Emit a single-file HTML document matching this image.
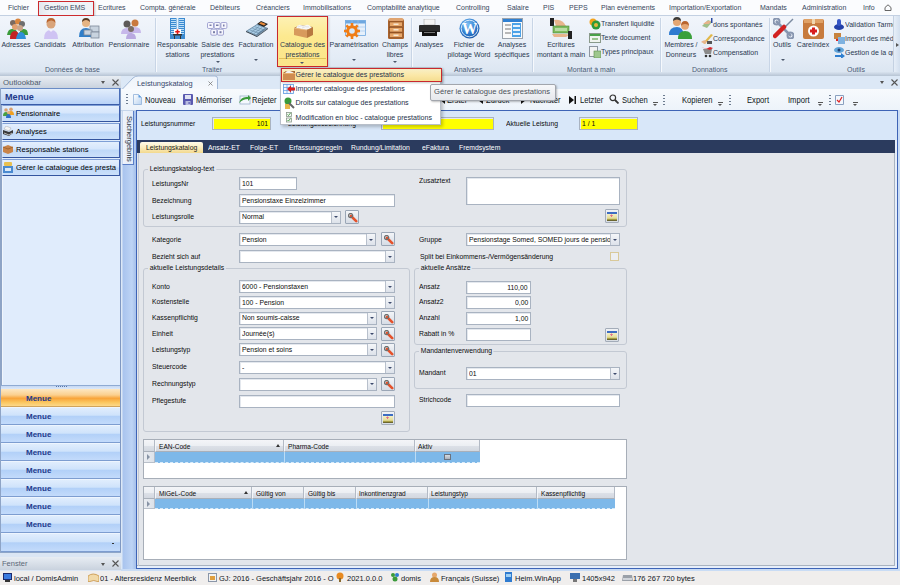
<!DOCTYPE html>
<html><head><meta charset="utf-8">
<style>
*{box-sizing:border-box}
html,body{margin:0;padding:0}
body{width:900px;height:585px;position:relative;overflow:hidden;background:#dbe6f4;font-family:"Liberation Sans",sans-serif;font-size:7px;color:#1c1c1c}
.a{position:absolute}
.t{position:absolute;white-space:nowrap;line-height:1}
/* menu */
#menubar{left:0;top:0;width:900px;height:16px;background:#fbfcfe;border-bottom:1px solid #c3d0e2}
.mi{position:absolute;top:4.2px;font-size:7px;color:#37465c;white-space:nowrap;line-height:1}
/* ribbon */
#ribbon{left:0;top:16px;width:900px;height:59px;background:linear-gradient(#f1f5fb,#e4ecf6 70%,#dbe5f1);border-bottom:1px solid #b9c9dd}
.rt{position:absolute;font-size:7px;color:#2a3850;white-space:nowrap;line-height:1;text-align:center}
.gl{position:absolute;top:65.8px;font-size:7px;color:#4a5a74;white-space:nowrap;line-height:1}
.sep{position:absolute;top:3px;width:1px;height:55px;background:#c8d5e6;box-shadow:1px 0 0 #f6f9fd}
.arr{position:absolute;width:0;height:0;border-left:2px solid transparent;border-right:2px solid transparent;border-top:2px solid #4a566a}
/* outlook */
.ob{position:absolute;left:2px;width:118px;border-left:1px solid #d3e3f9;border-top:1px solid #7f9fd6;border-bottom:1.5px solid #34559f;border-right:1px solid #3e5fae;background:linear-gradient(#e4effd,#d6e6fc 45%,#bed8f8 55%,#cbe0fa)}
.obt{position:absolute;left:16px;top:5px;font-size:7.6px;color:#000;white-space:nowrap;line-height:1}
.mb{position:absolute;left:2px;width:117px;height:18px;border-bottom:1px solid #7d9dd0;border-top:1px solid #eef5fe;background:linear-gradient(#e0edfd,#cfe3fb 45%,#b2d0f8 52%,#c3dbfb)}
.mbt{position:absolute;left:24px;top:5px;font-size:8px;font-weight:bold;color:#233a8c;line-height:1;margin-top:1px}
/* form */
.lb{position:absolute;font-size:7.9px;color:#0c0c0c;white-space:nowrap;line-height:1;transform:scaleX(.865);transform-origin:0 0}
.in{position:absolute;background:#fff;border:1px solid #a9b3c1;box-shadow:inset 1px 1px 0 #e4e8ee}
.in span{position:absolute;left:2px;top:2.5px;font-size:7.9px;color:#0c0c0c;white-space:nowrap;line-height:1;transform:scaleX(.865);transform-origin:0 0}
.dd{position:absolute;right:0;top:0;bottom:0;width:9px;background:linear-gradient(#f4f6f9,#dde2ea);border-left:1px solid #b8c0cc}
.dd:after{content:"";position:absolute;left:2px;top:4.5px;border-left:2.5px solid transparent;border-right:2.5px solid transparent;border-top:2.5px solid #3d4a6c}
.gb{position:absolute;border:1px solid #c3c9d3;border-radius:3px}
.gt{position:absolute;font-size:7.9px;color:#0c0c0c;transform:scaleX(.865);transform-origin:0 0;background:#e3e6ec;padding:0 2px;white-space:nowrap;line-height:1}
.wr{position:absolute;width:14px;height:14px;border:1px solid #9aa6b6;border-radius:1px;background:linear-gradient(#f3f5f8,#d6dce5)}
.ib{position:absolute;width:14px;height:14px;border:1px solid #a3acb9;border-radius:1px;background:linear-gradient(#f0f2f5,#d8dde4)}
.ib:after{content:"";position:absolute;left:1px;top:1.5px;width:10px;height:9px;background:radial-gradient(circle at 45% 40%,#e07088 0,#e07088 .9px,transparent 1.3px),linear-gradient(#3d6cc2 0,#3d6cc2 1.8px,#f4f0c6 1.8px,#e4dc98 70%,#b7ae48 80%,#4e4a26 100%)}
.gh{position:absolute;top:0;height:13px;background:linear-gradient(#f7f8fa,#e9ecf1 50%,#d9dee6);border-right:1px solid #b5bcc8;border-bottom:1px solid #a9b1bd}
.gh span{position:absolute;left:4px;top:3.5px;font-size:6.5px;color:#222;white-space:nowrap;line-height:1}
.gr{position:absolute;height:10px;background:#7db6ea;border-right:1px dashed #c8e0f6}

.tb{top:96.5px;font-size:8.2px;color:#0e1620;transform:scaleX(.93);transform-origin:0 0}
.tdd{position:absolute;top:102px;width:5px;height:5px}
.tdd:before{content:"";position:absolute;left:0;top:0;width:5px;height:1px;background:#555}
.tdd:after{content:"";position:absolute;left:0;top:2px;border-left:2.5px solid transparent;border-right:2.5px solid transparent;border-top:2.5px solid #555}
.grip{position:absolute;top:95px;width:2px;height:10px;background:repeating-linear-gradient(#6d7c90 0,#6d7c90 1px,transparent 1px,transparent 3px)}

.gh2{background:linear-gradient(#f4f5f8,#eceff3 50%,#dde1e8 52%,#d3d8e0);border-bottom:1px solid #a9b0ba;border-right:1px solid #b3bac5}
.st{position:absolute;top:574.6px;font-size:7.5px;color:#10161e;white-space:nowrap;line-height:1}
</style></head>
<body>



<!-- MENU BAR -->
<div id="menubar" class="a"></div>
<div class="mi" style="left:8px">Fichier</div>
<div class="a" style="left:37.5px;top:1px;width:56px;height:14.5px;border:1.5px solid #cc2a2e;background:linear-gradient(90deg,#e3e7ee,#f0f3f8 20%,#f0f3f8);box-shadow:1px 1px 2px rgba(0,0,0,.2)"></div>
<div class="mi" style="left:44px">Gestion EMS</div>
<div class="mi" style="left:98px">Ecritures</div>
<div class="mi" style="left:140px">Compta. générale</div>
<div class="mi" style="left:210px">Débiteurs</div>
<div class="mi" style="left:256px">Créanciers</div>
<div class="mi" style="left:303px">Immobilisations</div>
<div class="mi" style="left:367px">Comptabilité analytique</div>
<div class="mi" style="left:456px">Controlling</div>
<div class="mi" style="left:507px">Salaire</div>
<div class="mi" style="left:543px">PIS</div>
<div class="mi" style="left:569px">PEPS</div>
<div class="mi" style="left:601px">Plan evènements</div>
<div class="mi" style="left:669px">Importation/Exportation</div>
<div class="mi" style="left:760px">Mandats</div>
<div class="mi" style="left:802px">Administration</div>
<div class="mi" style="left:863px">Info</div>
<svg class="a" style="left:884px;top:4px" width="8" height="7" viewBox="0 0 8 7"><path d="M1 6.5V3.5L4 .8l3 2.7v3z" fill="none" stroke="#555" stroke-width=".9"/></svg>


<!-- RIBBON -->
<div id="ribbon" class="a"></div>
<div class="sep" style="left:155px;top:18px"></div>
<div class="sep" style="left:411px;top:18px"></div>
<div class="sep" style="left:532px;top:18px"></div>
<div class="sep" style="left:660px;top:18px"></div>
<div class="sep" style="left:769px;top:18px"></div>
<!-- Donnees de base -->
<svg class="a" style="left:7px;top:18px" width="21" height="21" viewBox="0 0 21 21">
 <circle cx="6" cy="5" r="3" fill="#7a6a60"/><circle cx="11" cy="3.5" r="3" fill="#d9863f"/><circle cx="15" cy="6" r="3" fill="#6e6e6e"/>
 <path d="M0 17q1-7 6-6 4 0 5 6z" fill="#3a9b3a"/><path d="M12 17q1-7 5-6 4 0 4 6z" fill="#3a9b3a"/>
 <circle cx="8" cy="9" r="3" fill="#e0a070"/><circle cx="13" cy="10" r="3" fill="#c9a489"/>
 <path d="M3 21q0-8 5-8 4 0 5 8z" fill="#c42424"/><path d="M9 21q1-7 5-7 4 0 5 7z" fill="#2f8fd8"/>
</svg>
<div class="rt" style="left:0px;width:32px;top:41.2px">Adresses</div>
<svg class="a" style="left:43px;top:18px" width="16" height="21" viewBox="0 0 16 21">
 <circle cx="8" cy="6" r="4.5" fill="#d9a47a"/><path d="M3.5 5q0-5 4.5-5 4.5 0 4.5 5q-2-3-4.5-2.5-2.5 0-4.5 2.5z" fill="#b9652e"/>
 <path d="M1 21q0-9 7-9 7 0 7 9z" fill="#cfc3f3"/><path d="M6 12h4l-2 2z" fill="#f4f0fa"/>
</svg>
<div class="rt" style="left:30px;width:40px;top:41.2px">Candidats</div>
<svg class="a" style="left:78px;top:18px" width="22" height="21" viewBox="0 0 22 21">
 <circle cx="8" cy="5" r="4" fill="#e6b483"/><path d="M4 4q0-4 4-4 4 0 4 4q-2-2-4-2-2 0-4 2z" fill="#5a3a20"/>
 <path d="M1 19q0-9 7-9 6 0 7 9z" fill="#2f7ec9"/>
 <rect x="12" y="8" width="9" height="6" fill="#c8d3df" stroke="#7b8797" stroke-width=".8"/>
 <rect x="6" y="12" width="8" height="5" fill="#c8d3df" stroke="#7b8797" stroke-width=".8"/>
 <rect x="13" y="14" width="8" height="6" fill="#c8d3df" stroke="#7b8797" stroke-width=".8"/>
</svg>
<div class="rt" style="left:68px;width:40px;top:41.2px">Attribution</div>
<svg class="a" style="left:120px;top:18px" width="21" height="21" viewBox="0 0 21 21">
 <circle cx="7" cy="6" r="3.5" fill="#5e5a58"/><circle cx="15" cy="5" r="3.5" fill="#c9793f"/>
 <path d="M1 16q0-6 6-6 5 0 5 6z" fill="#c7b8ea"/><path d="M10 15q0-6 5-6 6 0 6 6z" fill="#c7b8ea"/>
 <circle cx="11" cy="11" r="3" fill="#7a6e66"/><path d="M6 21q0-6 5-6 5 0 5 6z" fill="#b9a9e0"/>
</svg>
<div class="rt" style="left:104px;width:50px;top:41.2px">Pensionnaire</div>
<div class="gl" style="left:45px">Données de base</div>
<!-- Traiter -->
<svg class="a" style="left:169px;top:18px" width="17" height="21" viewBox="0 0 17 21">
 <rect x="1" y="0" width="15" height="21" fill="#3b8ad0"/>
 <g fill="#bfe0f8"><rect x="2" y="1" width="5" height="1"/><rect x="10" y="1" width="5" height="1"/><rect x="2" y="3" width="5" height="1"/><rect x="10" y="3" width="5" height="1"/><rect x="2" y="5" width="5" height="1"/><rect x="10" y="5" width="5" height="1"/><rect x="2" y="7" width="5" height="1"/><rect x="10" y="7" width="5" height="1"/><rect x="2" y="9" width="5" height="1"/><rect x="10" y="9" width="5" height="1"/><rect x="2" y="11" width="3" height="1"/><rect x="12" y="11" width="3" height="1"/><rect x="2" y="13" width="3" height="1"/><rect x="12" y="13" width="3" height="1"/><rect x="2" y="15" width="3" height="1"/><rect x="12" y="15" width="3" height="1"/></g>
 <rect x="7.5" y="0" width="2" height="11" fill="#e8f4fc"/>
 <rect x="5" y="11" width="7" height="5" fill="#fff"/><path d="M7.7 11.5h1.6v1.4h1.5v1.6H9.3v1.4H7.7v-1.4H6.2v-1.6h1.5z" fill="#e01818"/>
 <rect x="4" y="16" width="9" height="1.5" fill="#333"/><rect x="5" y="17.5" width="1" height="3.5" fill="#333"/><rect x="11" y="17.5" width="1" height="3.5" fill="#333"/>
</svg>
<div class="rt" style="left:150px;width:55px;top:41.2px">Responsable</div>
<div class="rt" style="left:150px;width:55px;top:51px">stations</div>
<svg class="a" style="left:207px;top:22px" width="21" height="14" viewBox="0 0 21 14">
 <g fill="#f6f6fd" stroke="#8f92c8" stroke-width=".8"><rect x=".5" y=".5" width="6" height="6" rx="1.2"/><rect x="7.2" y=".5" width="6" height="6" rx="1.2"/><rect x="13.9" y=".5" width="6" height="6" rx="1.2"/><rect x="3.8" y="7.2" width="6" height="6" rx="1.2"/><rect x="10.5" y="7.2" width="6" height="6" rx="1.2"/></g>
 <g fill="#7a7fa8"><rect x="2.5" y="2.5" width="2" height="1.5"/><rect x="9" y="2.5" width="2.5" height="1.5"/><rect x="16" y="2.5" width="1.5" height="2"/><rect x="6" y="9.2" width="2" height="2"/><rect x="12.5" y="9.2" width="2" height="2"/></g>
</svg>
<div class="rt" style="left:190px;width:55px;top:41.2px">Saisie des</div>
<div class="rt" style="left:190px;width:55px;top:51px">prestations</div>
<div class="arr" style="left:216px;top:61px"></div>
<svg class="a" style="left:246px;top:21px" width="22" height="16" viewBox="0 0 22 16">
 <path d="M0 10L11 3l11 4-11 8z" fill="#6f8ea8"/><path d="M1.5 10L11 4l8 3-9 6.5z" fill="#a9cde6"/>
 <g stroke="#5a7a96" stroke-width=".5"><path d="M4 9l9 3.2M6.5 7.4l9 3.2M9 5.8l8.5 3"/><path d="M5 11.5l8-6M8 12.5l8-6M11 13.5l7.5-5.5"/></g>
 <path d="M11 3l4-3 7 3-4 3z" fill="#222"/><path d="M15 1l5 2-2 1.5-5-2z" fill="#e88a3a"/>
 <path d="M0 10l11 5v1L0 11z" fill="#2c3a46"/><path d="M11 15l11-8v1l-11 8z" fill="#3c4a56"/>
</svg>
<div class="rt" style="left:230px;width:52px;top:41.2px">Facturation</div>
<div class="arr" style="left:254px;top:59px"></div>
<div class="gl" style="left:202px">Traiter</div>
<!-- Catalogue highlighted -->
<div class="a" style="left:277px;top:16px;width:50.5px;height:50.5px;border:1.5px solid #c8282e;background:linear-gradient(#fdf1b4,#fde98f 40%,#fbe58a);box-shadow:1px 1px 2px rgba(0,0,0,.18)"></div>
<div class="a" style="left:279px;top:58px;width:47px;height:1px;background:#e2c25a"></div>
<svg class="a" style="left:293px;top:24px" width="21" height="14" viewBox="0 0 21 14">
 <path d="M1 4l6-3 13 2-6 3z" fill="#a86a34"/>
 <path d="M3 4q2-4 5-3t5 0 4 1 2 2l-6 2z" fill="#f8f8f8"/><path d="M5 3q3-2 6-1M9 4q3-2 7-1" stroke="#ccc" stroke-width=".5" fill="none"/>
 <path d="M1 4l13 2v8L1 11z" fill="#d89a5c"/><path d="M14 6l6-3v8l-6 3z" fill="#b87840"/>
 <path d="M1 4l13 2" stroke="#f0c890" stroke-width=".6"/>
</svg>
<div class="rt" style="left:277px;width:51px;top:41.2px">Catalogue des</div>
<div class="rt" style="left:277px;width:51px;top:51px">prestations</div>
<div class="arr" style="left:300px;top:62px"></div>
<svg class="a" style="left:344px;top:20px" width="22" height="19" viewBox="0 0 22 19">
 <rect x="1.5" y=".5" width="20" height="15" fill="#e6f0fb" stroke="#6fa8e0" stroke-width=".8"/><rect x="1.5" y=".5" width="20" height="3" fill="#6fa8e0"/>
 <g stroke="#9cc4ec" stroke-width=".6"><path d="M8 0v16M14 0v16M1 7h21M1 11h21"/></g>
 <g transform="translate(8 11)"><circle r="5.8" fill="#f07d16"/><g fill="#f07d16"><rect x="-1.3" y="-8" width="2.6" height="16"/><rect x="-8" y="-1.3" width="16" height="2.6"/><rect x="-1.3" y="-8" width="2.6" height="16" transform="rotate(45)"/><rect x="-1.3" y="-8" width="2.6" height="16" transform="rotate(-45)"/></g><circle r="2.8" fill="#d8e8f8"/></g>
</svg>
<div class="rt" style="left:325px;width:58px;top:41.2px">Paramétrisation</div>
<div class="arr" style="left:352px;top:59px"></div>
<svg class="a" style="left:388px;top:18px" width="16" height="21" viewBox="0 0 16 21">
 <rect x="0" y="1" width="16" height="20" rx="1.5" fill="#a8622c"/><rect x=".5" y="0" width="15" height="3" rx="1.5" fill="#e0a470"/>
 <g fill="#e8a86a" stroke="#7a4018" stroke-width=".5"><rect x="1.5" y="4" width="13" height="4.5"/><rect x="1.5" y="9.5" width="13" height="4.5"/><rect x="1.5" y="15" width="13" height="4.5"/></g>
 <g fill="#f6e6d0"><rect x="5.5" y="5.5" width="5" height="1.5"/><rect x="5.5" y="11" width="5" height="1.5"/><rect x="5.5" y="16.5" width="5" height="1.5"/></g>
</svg>
<div class="rt" style="left:375px;width:40px;top:41.2px">Champs</div>
<div class="rt" style="left:375px;width:40px;top:51px">libres</div>
<div class="arr" style="left:393px;top:61px"></div>
<!-- Analyses -->
<svg class="a" style="left:419px;top:19px" width="21" height="17" viewBox="0 0 21 17">
 <rect x="5" y="0" width="11" height="6" fill="#f4f4f4" stroke="#999" stroke-width=".5"/><path d="M1 6h19q1 0 1 1v6H0V7q0-1 1-1z" fill="#2b2b2b"/><rect x="3" y="12" width="15" height="5" fill="#111"/><rect x="5" y="13" width="11" height="1" fill="#777"/>
</svg>
<div class="rt" style="left:410px;width:38px;top:41.2px">Analyses</div>
<svg class="a" style="left:459px;top:18px" width="21" height="21" viewBox="0 0 21 21">
 <defs><radialGradient id="wg" cx=".4" cy=".3" r=".8"><stop offset="0" stop-color="#7ec0f4"/><stop offset=".6" stop-color="#2a78cc"/><stop offset="1" stop-color="#1a4f9a"/></radialGradient></defs>
 <circle cx="10.5" cy="10.5" r="10" fill="url(#wg)"/><circle cx="10.5" cy="10.5" r="8.3" fill="none" stroke="#e8f3fc" stroke-width=".9"/>
 <text x="10.5" y="16" text-anchor="middle" font-family="Liberation Serif" font-weight="bold" font-size="16" fill="#fff" transform="translate(10.5 0) scale(.95 1) translate(-10.5 0)">W</text>
</svg>
<div class="rt" style="left:440px;width:58px;top:41.2px">Fichier de</div>
<div class="rt" style="left:438px;width:62px;top:51px">pilotage Word</div>
<svg class="a" style="left:502px;top:18px" width="21" height="21" viewBox="0 0 21 21">
 <rect x=".5" y=".5" width="20" height="20" fill="#fafafa" stroke="#9aa3ad"/><rect x="1" y="1" width="19" height="3" fill="#2f80d2"/>
 <g fill="#b8b8b8"><rect x="3" y="6" width="6" height="2"/><rect x="3" y="10" width="6" height="2"/><rect x="3" y="14" width="6" height="2"/></g>
 <rect x="10" y="5" width="9" height="14" fill="#4da3e8"/><g fill="#e7f3fd"><rect x="11" y="7" width="7" height="2"/><rect x="11" y="11" width="7" height="2"/><rect x="11" y="15" width="7" height="2"/></g>
</svg>
<div class="rt" style="left:484px;width:56px;top:41.2px">Analyses</div>
<div class="rt" style="left:484px;width:56px;top:51px">spécifiques</div>
<div class="gl" style="left:454px">Analyses</div>
<!-- Montant a main -->
<svg class="a" style="left:550px;top:18px" width="22" height="21" viewBox="0 0 22 21">
 <rect x="0" y="0" width="4" height="8" fill="#222"/><path d="M4 2q6-1 10 3l2 3H6z" fill="#e8b58c"/>
 <rect x="3" y="8" width="16" height="7" fill="#7dbb5e" stroke="#4b8a36" stroke-width=".6"/><rect x="5" y="10" width="12" height="3" fill="#b9dca4"/>
 <path d="M2 16h12q4 0 5 1l-3 2H4z" fill="#e8b58c"/><rect x="18" y="13" width="4" height="8" fill="#222"/>
</svg>
<div class="rt" style="left:535px;width:52px;top:41.2px">Ecritures</div>
<div class="rt" style="left:531px;width:60px;top:51px">montant à main</div>
<svg class="a" style="left:589px;top:18px" width="12" height="12" viewBox="0 0 12 12"><circle cx="4" cy="4" r="3.5" fill="#f2a31d"/><circle cx="7" cy="7" r="4.5" fill="#2e9a3a"/><circle cx="7" cy="7" r="2" fill="#e5b73d"/></svg>
<div class="t" style="left:601px;top:20px;font-size:7px;color:#2a3850">Transfert liquidité</div>
<svg class="a" style="left:589px;top:33px" width="12" height="10" viewBox="0 0 12 10"><rect x=".5" y=".5" width="11" height="9" fill="#f0f4ef" stroke="#8a9a8a"/><rect x="1" y="1" width="10" height="2" fill="#4aa048"/><rect x="3" y="5" width="6" height="2" fill="#9ac48f"/></svg>
<div class="t" style="left:601px;top:34px;font-size:7px;color:#2a3850">Texte document</div>
<svg class="a" style="left:589px;top:46px" width="12" height="12" viewBox="0 0 12 12"><rect x=".5" y=".5" width="8" height="10" fill="#f3f3f3" stroke="#8d96a0"/><rect x="5" y="5" width="7" height="7" fill="#9ec78d" stroke="#5b8e4c" stroke-width=".6"/></svg>
<div class="t" style="left:601px;top:48px;font-size:7px;color:#2a3850">Types principaux</div>
<div class="gl" style="left:567px">Montant à main</div>
<!-- Donnations -->
<svg class="a" style="left:669px;top:17px" width="23" height="22" viewBox="0 0 23 22">
 <circle cx="8" cy="5" r="4" fill="#e5a774"/><path d="M4 4q0-4 4-4 4 0 4 4q-2-1.5-4-1.5T4 4z" fill="#3b3b3b"/>
 <path d="M0 18q0-8 8-8 6 0 7 8z" fill="#2f7bd0"/>
 <circle cx="16" cy="9" r="3.8" fill="#e5a774"/><path d="M12 9q0-5 4-5 4 0 4 5q-1-2-4-2t-4 2z" fill="#b9652e"/>
 <path d="M9 22q0-8 7-8 7 0 7 8z" fill="#3aa03a"/>
</svg>
<div class="rt" style="left:655px;width:52px;top:41.2px">Membres /</div>
<div class="rt" style="left:655px;width:52px;top:51px">Donneurs</div>
<svg class="a" style="left:701px;top:18px" width="12" height="12" viewBox="0 0 12 12"><path d="M1 8l6-6 4 2-5 6z" fill="#9fbf8a"/><path d="M2 6q4-4 8-3l-2 3z" fill="#e7b48a"/><rect x="10" y="0" width="1.5" height="5" fill="#2a4aa0"/></svg>
<div class="t" style="left:713px;top:20.5px;font-size:7px;color:#2a3850">dons spontanés</div>
<svg class="a" style="left:701px;top:32px" width="12" height="12" viewBox="0 0 12 12"><path d="M2 11l8-9 2 1-8 9z" fill="#e1b84a"/><path d="M0 10q3-3 6-1l-2 3z" fill="#e7b48a"/><rect x="6" y="9" width="5" height="3" fill="#555"/></svg>
<div class="t" style="left:713px;top:34.5px;font-size:7px;color:#2a3850">Correspondance</div>
<svg class="a" style="left:701px;top:46px" width="12" height="12" viewBox="0 0 12 12"><path d="M2 3h9l-1 5H4z" fill="#8a8a8a"/><circle cx="5" cy="10" r="1.3" fill="#333"/><circle cx="9" cy="10" r="1.3" fill="#333"/><path d="M0 1l5 2 4-2 3 1-3 2z" fill="#d9262b"/></svg>
<div class="t" style="left:713px;top:48.5px;font-size:7px;color:#2a3850">Compensation</div>
<div class="gl" style="left:692px">Donnations</div>
<!-- Outils -->
<svg class="a" style="left:773px;top:18px" width="21" height="21" viewBox="0 0 21 21">
 <path d="M3 3l15 15" stroke="#8896b0" stroke-width="2.5"/><circle cx="3.5" cy="3.5" r="3" fill="none" stroke="#8896b0" stroke-width="2"/><circle cx="17.5" cy="17.5" r="3" fill="none" stroke="#8896b0" stroke-width="2"/>
 <path d="M20 1L11 10" stroke="#7b8aa0" stroke-width="1.5"/><path d="M11 9l-9 9" stroke="#d22222" stroke-width="4.5" stroke-linecap="round"/>
</svg>
<div class="rt" style="left:767px;width:30px;top:41.2px">Outils</div>
<div class="arr" style="left:781px;top:59px"></div>
<svg class="a" style="left:803px;top:18px" width="21" height="21" viewBox="0 0 21 21">
 <rect x="0" y="1" width="21" height="20" rx="2" fill="#c77b3e"/><rect x="1" y="1" width="19" height="4" fill="#e0a267"/><rect x="9" y="1" width="3" height="5" fill="#f0d7b0"/>
 <circle cx="10.5" cy="13" r="5.5" fill="#fff"/><path d="M9 9.5h3v2h2v3h-2v2H9v-2H7v-3h2z" fill="#d81e1e"/>
</svg>
<div class="rt" style="left:795px;width:36px;top:41.2px">CareIndex</div>
<svg class="a" style="left:834px;top:18px" width="10" height="12" viewBox="0 0 10 12"><ellipse cx="5" cy="9" rx="5" ry="3" fill="#2340a8"/><rect x="3" y="1" width="4" height="7" rx="2" fill="#3656c6"/></svg>
<div class="t" style="left:845px;top:20.5px;font-size:7px;color:#2a3850;width:48px;overflow:hidden">Validation Tarmed</div>
<svg class="a" style="left:834px;top:32px" width="11" height="12" viewBox="0 0 11 12"><rect x="0" y="1" width="7" height="6" fill="#c7843f"/><rect x="4" y="5" width="7" height="7" fill="#7fb2e0"/><path d="M2 7h2v2H2z" fill="#d22"/></svg>
<div class="t" style="left:845px;top:34.5px;font-size:7px;color:#2a3850;width:48px;overflow:hidden">Import des médicaments</div>
<svg class="a" style="left:834px;top:46px" width="11" height="12" viewBox="0 0 11 12"><ellipse cx="5" cy="4" rx="5" ry="3" fill="#5fa3d8"/><circle cx="5" cy="4" r="1.5" fill="#1f3f70"/><path d="M1 9h6V7l4 3-4 3v-2H1z" fill="#2f7fd0"/></svg>
<div class="t" style="left:845px;top:48.5px;font-size:7px;color:#2a3850;width:48px;overflow:hidden">Gestion de la qualité</div>
<div class="gl" style="left:847px">Outils</div>
<div class="a" style="left:893px;top:16px;width:7px;height:57px;background:linear-gradient(90deg,#e6eef8,#d3dfee);border-left:1px solid #c4d1e2"></div>
<div class="a" style="left:896px;top:43px;border-top:2px solid transparent;border-bottom:2px solid transparent;border-left:3px solid #555"></div>

<!-- OUTLOOKBAR -->
<div class="a" style="left:0;top:72px;width:900px;height:4px;background:linear-gradient(#d9e3ef,#b7c4d4)"></div>
<div class="a" style="left:0;top:76px;width:121px;height:477px;background:#e0ecfc;border-right:1px solid #7f98c2;border-left:2px solid #8ea4c6;box-shadow:inset 1px 0 0 #f0f5fc"></div>
<div class="a" style="left:0;top:76px;width:121px;height:12px;background:linear-gradient(#e8edf3,#c9d2de)"></div>
<div class="t" style="left:3px;top:79px;font-size:7.8px;color:#4f5b6c">Outlookbar</div>
<div class="a" style="left:101px;top:81px;border-left:2.5px solid transparent;border-right:2.5px solid transparent;border-top:3px solid #555"></div>
<svg class="a" style="left:112px;top:79px" width="7" height="7" viewBox="0 0 7 7"><path d="M.5.5l6 6M6.5.5l-6 6" stroke="#555" stroke-width="1.1"/></svg>
<div class="a" style="left:1px;top:88px;width:119px;height:17px;border-top:1px solid #6a8cc6;border-bottom:1px solid #3a5ca8;border-right:1px solid #4a6fb8;background:linear-gradient(#e2eefc,#cfe0f9 50%,#b9d3f7)"></div>
<div class="t" style="left:4.5px;top:91.5px;font-size:9.6px;font-weight:bold;color:#1f3a8a;transform:scaleX(.95);transform-origin:0 0">Menue</div>
<div class="ob" style="top:105px;height:17px"></div>
<div class="ob" style="top:123px;height:17px"></div>
<div class="ob" style="top:141px;height:17px"></div>
<div class="ob" style="top:159px;height:17px"></div>
<svg class="a" style="left:3px;top:107px" width="11" height="11" viewBox="0 0 11 11"><circle cx="3" cy="3" r="1.8" fill="#d9a070"/><circle cx="8" cy="2.2" r="1.8" fill="#d9a070"/><path d="M0 9q0-4 3-4t3 4z" fill="#4aa040"/><path d="M5 8q0-4 3-4t3 4z" fill="#f0a020"/><circle cx="5.5" cy="5.5" r="1.6" fill="#e0b080"/><path d="M3 11q0-4 2.5-4T8 11z" fill="#2f6fc8"/></svg>
<div class="obt" style="top:110px">Pensionnaire</div>
<svg class="a" style="left:3px;top:126px" width="10" height="10" viewBox="0 0 10 10"><path d="M3 0l5 2-2 3-5-2z" fill="#f4f4f4" stroke="#999" stroke-width=".4"/><path d="M0 4l6 2 4-2v3l-4 3-6-2z" fill="#3a3a3a"/><path d="M1 7l5 2 3-2" fill="none" stroke="#ddd" stroke-width=".8"/></svg>
<div class="obt" style="top:128px">Analyses</div>
<svg class="a" style="left:3px;top:144px" width="10" height="10" viewBox="0 0 10 10"><path d="M0 3l5-2 5 2v5l-5 2-5-2z" fill="#c98449"/><path d="M0 3l5 2 5-2" fill="none" stroke="#8a5020" stroke-width=".6"/></svg>
<div class="obt" style="top:146px">Responsable stations</div>
<svg class="a" style="left:3px;top:162px" width="10" height="11" viewBox="0 0 10 11"><rect x="1" y="0" width="8" height="4" rx="1" fill="#e8c050"/><rect x="0" y="4" width="10" height="7" fill="#4a8ad0"/><rect x="2" y="6" width="6" height="3" fill="#dbe9f8"/></svg>
<div class="obt" style="top:164px;width:100px;overflow:hidden">Gérer le catalogue des prestations</div>
<!-- splitter -->
<div class="a" style="left:1px;top:385px;width:119px;height:4px;background:linear-gradient(#c6d8f2,#dbe8fa);border-top:1px solid #8eaad3"></div>
<div class="a" style="left:56px;top:386px;width:11px;height:1px;background:repeating-linear-gradient(90deg,#5c78a8 0,#5c78a8 1px,transparent 1px,transparent 2px)"></div>
<div class="a" style="left:1px;top:389px;width:119px;height:18px;border-bottom:1px solid #d0a45c;background:linear-gradient(#fde7c2,#fbd08f 35%,#f8a43a 55%,#fbc862 80%,#fcd88a)"></div>
<div class="mbt" style="left:26px;top:394px">Menue</div>
<div class="mb" style="width:119px;left:1px;top:407px"></div><div class="mbt" style="left:26px;top:412px">Menue</div>
<div class="mb" style="width:119px;left:1px;top:425px"></div><div class="mbt" style="left:26px;top:430px">Menue</div>
<div class="mb" style="width:119px;left:1px;top:443px"></div><div class="mbt" style="left:26px;top:448px">Menue</div>
<div class="mb" style="width:119px;left:1px;top:461px"></div><div class="mbt" style="left:26px;top:466px">Menue</div>
<div class="mb" style="width:119px;left:1px;top:479px"></div><div class="mbt" style="left:26px;top:484px">Menue</div>
<div class="mb" style="width:119px;left:1px;top:497px"></div><div class="mbt" style="left:26px;top:502px">Menue</div>
<div class="mb" style="width:119px;left:1px;top:515px"></div><div class="mbt" style="left:26px;top:520px">Menue</div>
<div class="mb" style="width:119px;left:1px;top:533px;height:19px"></div>
<div class="a" style="left:112px;top:543px;width:2px;height:1px;background:#333"></div>
<div class="a" style="left:0;top:552px;width:121px;height:1px;background:#8ea6c8"></div>
<!-- Fenster -->
<div class="a" style="left:0;top:553px;width:121px;height:4px;background:#dbe6f4"></div>
<div class="a" style="left:0;top:557px;width:121px;height:13px;background:linear-gradient(#e8edf3,#c9d2de)"></div>
<div class="t" style="left:2px;top:560px;font-size:7.5px;color:#5c6878">Fenster</div>
<div class="a" style="left:101px;top:563px;border-left:2.5px solid transparent;border-right:2.5px solid transparent;border-top:3px solid #555"></div>
<svg class="a" style="left:112px;top:560px" width="7" height="7" viewBox="0 0 7 7"><path d="M.5.5l6 6M6.5.5l-6 6" stroke="#555" stroke-width="1.1"/></svg>

<!-- DOC AREA -->
<div class="a" style="left:121px;top:76px;width:779px;height:13px;background:#dce8f6"></div>
<svg class="a" style="left:121px;top:75px" width="98" height="15" viewBox="0 0 98 15"><path d="M1 14.5L12 3Q14 1 17 1H94q2.5 0 2.5 2.5V14.5z" fill="url(#tg)" stroke="#a3b8d6" stroke-width="1"/><defs><linearGradient id="tg" x1="0" y1="0" x2="0" y2="1"><stop offset="0" stop-color="#eef4fb"/><stop offset="1" stop-color="#f6f9fd"/></linearGradient></defs></svg>
<div class="t" style="left:137px;top:79.5px;font-size:7.8px;color:#34466a;transform:scaleX(.95);transform-origin:0 0">Leistungskatalog</div>
<svg class="a" style="left:208px;top:81px" width="5" height="5" viewBox="0 0 5 5"><path d="M.5.5l4 4M4.5.5l-4 4" stroke="#7a7a7a" stroke-width=".8"/></svg>
<div class="a" style="left:880px;top:81px;border-left:2.5px solid transparent;border-right:2.5px solid transparent;border-top:3px solid #555"></div>
<svg class="a" style="left:891px;top:79px" width="7" height="7" viewBox="0 0 7 7"><path d="M.5.5l6 6M6.5.5l-6 6" stroke="#555" stroke-width="1.1"/></svg>
<!-- toolbar -->
<div class="a" style="left:121px;top:89px;width:779px;height:22px;background:linear-gradient(#f7fafd,#edf3fa);border-bottom:1px solid #c4d4ea"></div>
<div class="a" style="left:126px;top:94px;width:2px;height:11px;background:repeating-linear-gradient(#6d7c90 0,#6d7c90 1px,transparent 1px,transparent 3px)"></div>
<svg class="a" style="left:133px;top:94px" width="9" height="11" viewBox="0 0 9 11"><defs><linearGradient id="ng" x1="0" y1="0" x2="1" y2="1"><stop offset="0" stop-color="#fff"/><stop offset="1" stop-color="#b9d3f0"/></linearGradient></defs><path d="M.5.5h5l3 3v7H.5z" fill="url(#ng)" stroke="#8fb0d8" stroke-width=".8"/><path d="M5.5.5v3h3" fill="#5b9be0"/></svg>
<div class="t tb" style="left:145px">Nouveau</div>
<svg class="a" style="left:183px;top:94px" width="10" height="11" viewBox="0 0 10 11"><rect x="0" y="0" width="10" height="11" rx="1" fill="#5a5ab0"/><rect x="2" y="1" width="6" height="4" fill="#dfe2f2"/><rect x="2.5" y="7" width="5" height="4" fill="#b8bce0"/><rect x="5.5" y="8" width="1.2" height="2" fill="#5a5ab0"/></svg>
<div class="t tb" style="left:196px">Mémoriser</div>
<svg class="a" style="left:239px;top:93px" width="12" height="12" viewBox="0 0 12 12"><rect x="1" y="3" width="10" height="8" fill="#f4f8fd" stroke="#9db2cc" stroke-width=".8"/><path d="M0 10q2-7 9-6V2l3 3-3 3V6q-5 0-9 4z" fill="#3a9a3a"/></svg>
<div class="t tb" style="left:252px">Rejeter</div>
<svg class="a" style="left:439px;top:96px" width="6" height="8" viewBox="0 0 6 8"><rect x="0" y="0" width="1.5" height="8" fill="#111"/><path d="M6 0L1.5 4 6 8z" fill="#111"/></svg>
<div class="t tb" style="left:447px">Erster</div>
<svg class="a" style="left:478px;top:96px" width="5" height="8" viewBox="0 0 5 8"><path d="M5 0L0 4 5 8z" fill="#111"/></svg>
<div class="t tb" style="left:486px">Zurück</div>
<svg class="a" style="left:521px;top:96px" width="5" height="8" viewBox="0 0 5 8"><path d="M0 0l5 4-5 4z" fill="#111"/></svg>
<div class="t tb" style="left:530px">Nächster</div>
<svg class="a" style="left:569px;top:96px" width="7" height="8" viewBox="0 0 7 8"><path d="M0 0l5 4-5 4z" fill="#111"/><rect x="5.5" y="0" width="1.5" height="8" fill="#111"/></svg>
<div class="t tb" style="left:580px">Letzter</div>
<svg class="a" style="left:609px;top:94px" width="10" height="10" viewBox="0 0 10 10"><circle cx="3.8" cy="3.8" r="2.8" fill="none" stroke="#333" stroke-width="1.2"/><path d="M6 6l3.5 3.5" stroke="#333" stroke-width="1.8"/></svg>
<div class="t tb" style="left:622px">Suchen</div>
<div class="tdd" style="left:653px"></div>
<div class="grip" style="left:663px"></div>
<div class="t tb" style="left:682px">Kopieren</div>
<div class="tdd" style="left:718px"></div>
<div class="grip" style="left:729px"></div>
<div class="t tb" style="left:747px">Export</div>
<div class="t tb" style="left:788px">Import</div>
<div class="tdd" style="left:818px"></div>
<div class="grip" style="left:829px"></div>
<svg class="a" style="left:835px;top:95px" width="9" height="10" viewBox="0 0 9 10"><path d="M.5.5h8v9h-8z" fill="#f4f8fd" stroke="#8aa0c0"/><path d="M2 5l2 2 3-5" fill="none" stroke="#d22" stroke-width="1.2"/></svg>
<div class="tdd" style="left:853px"></div>
<!-- left strip + suchergebnis -->
<div class="a" style="left:121px;top:111px;width:15px;height:460px;background:linear-gradient(90deg,#dce8f6 0,#dce8f6 1px,#a9c4ee 2px,#bdd4f5 11px,#aac4ec 14px)"></div>
<div class="a" style="left:122px;top:111px;width:12px;height:54px;background:linear-gradient(90deg,#eef3fb,#e2ebf8);border:1px solid #5a7fc8;border-left:1px solid #c8d8ef;border-top:none"></div>
<div class="t" style="left:126px;top:116px;font-size:7.5px;color:#2a3340;transform-origin:0 0;transform:translate(7px,0) rotate(90deg)">Suchergebnis</div>
<!-- content panel -->
<div class="a" style="left:898px;top:110px;width:2px;height:461px;background:#c9dcf5"></div>
<div class="a" style="left:121px;top:569px;width:779px;height:2px;background:#c9dcf5"></div>
<div class="a" style="left:136px;top:110px;width:762px;height:459px;border:1px solid #3e64b6;background:#e6eefa"></div>
<div class="a" style="left:137px;top:111px;width:758px;height:455px;border-right:1px solid #a9b3c0;border-bottom:1px solid #a9b3c0;background:#e3e6eb"></div>
<div class="a" style="left:137px;top:111px;width:760px;height:29px;background:#d8e7f9"></div>
<div class="a" style="left:138px;top:153px;width:1px;height:413px;background:#c3cad5"></div>

<!-- FORM -->
<div class="lb" style="left:141px;top:119.7px">Leistungsnummer</div>
<div class="in" style="left:212px;top:117px;width:59px;height:13px;background:#ffff00"><span style="left:auto;right:2px;top:1.6px;transform-origin:100% 0">101</span></div>
<div class="lb" style="left:288px;top:119.7px">Leistungsbezeichnung</div>
<div class="in" style="left:381px;top:117px;width:113px;height:13px;background:#ffff00"></div>
<div class="lb" style="left:506px;top:119.7px">Aktuelle Leistung</div>
<div class="in" style="left:579px;top:117px;width:59px;height:13px;background:#ffff00"><span style="top:1.6px">1 / 1</span></div>
<div class="a" style="left:137px;top:140px;width:758px;height:13px;background:#2b3b5e"></div>
<div class="a" style="left:140px;top:141.5px;width:63px;height:11.5px;border-radius:2px 2px 0 0;background:linear-gradient(#fffbea,#fbedbf 50%,#f3d98e)"></div>
<div class="lb" style="left:146px;top:143.6px;color:#1a1a1a">Leistungskatalog</div>
<div class="lb" style="left:208px;top:143.6px;color:#fff">Ansatz-ET</div>
<div class="lb" style="left:250px;top:143.6px;color:#fff">Folge-ET</div>
<div class="lb" style="left:289px;top:143.6px;color:#fff">Erfassungsregeln</div>
<div class="lb" style="left:351px;top:143.6px;color:#fff">Rundung/Limitation</div>
<div class="lb" style="left:421.5px;top:143.6px;color:#fff">eFaktura</div>
<div class="lb" style="left:459px;top:143.6px;color:#fff">Fremdsystem</div>
<div class="gb" style="left:143px;top:169px;width:484px;height:58px"></div>
<div class="gt" style="left:148px;top:165.4px">Leistungskatalog-text</div>
<div class="lb" style="left:152px;top:179.7px">LeistungsNr</div>
<div class="in" style="left:239px;top:177px;width:58px;height:13px;background:#fff"><span style="top:1.6px">101</span></div>
<div class="lb" style="left:152px;top:196.7px">Bezeichnung</div>
<div class="in" style="left:239px;top:194px;width:156px;height:13px;background:#fff"><span style="top:1.6px">Pensionstaxe Einzelzimmer</span></div>
<div class="lb" style="left:152px;top:213.2px">Leistungsrolle</div>
<div class="in" style="left:239px;top:210.5px;width:102px;height:13.0px"><span style="top:1.6px;width:104.0px;overflow:hidden">Normal</span><div class="dd"></div></div>
<div class="wr" style="left:345px;top:210px"><svg style="position:absolute;left:1.5px;top:1.5px" width="10" height="10" viewBox="0 0 10 10"><path d="M3 3l5.2 5.2" stroke="#e5522b" stroke-width="2.6" stroke-linecap="round"/><circle cx="2.6" cy="2.6" r="2.1" fill="none" stroke="#6f6f6f" stroke-width="1.3"/></svg></div>
<div class="lb" style="left:419px;top:177.2px">Zusatztext</div>
<div class="in" style="left:466px;top:177px;width:154px;height:28px;background:#fff"></div>
<div class="ib" style="left:605px;top:209px"></div>
<div class="lb" style="left:152px;top:235.7px">Kategorie</div>
<div class="in" style="left:239px;top:233px;width:137px;height:13px"><span style="top:1.6px;width:144.5px;overflow:hidden">Pension</span><div class="dd"></div></div>
<div class="wr" style="left:381px;top:232px"><svg style="position:absolute;left:1.5px;top:1.5px" width="10" height="10" viewBox="0 0 10 10"><path d="M3 3l5.2 5.2" stroke="#e5522b" stroke-width="2.6" stroke-linecap="round"/><circle cx="2.6" cy="2.6" r="2.1" fill="none" stroke="#6f6f6f" stroke-width="1.3"/></svg></div>
<div class="lb" style="left:152px;top:252.7px">Bezieht sich auf</div>
<div class="in" style="left:239px;top:250px;width:156px;height:13px"><div class="dd"></div></div>
<div class="lb" style="left:419px;top:235.7px">Gruppe</div>
<div class="in" style="left:466px;top:233px;width:154px;height:13px"><span style="top:1.6px;width:164.2px;overflow:hidden">Pensionstage Somed, SOMED jours de pensio</span><div class="dd"></div></div>
<div class="lb" style="left:420px;top:253.2px">Split bei Einkommens-/Vermögensänderung</div>
<div class="a" style="left:610px;top:252px;width:9px;height:9px;border:1px solid #d9c99a;background:#eceef2"></div>
<div class="gb" style="left:143px;top:268px;width:267px;height:164px"></div>
<div class="gt" style="left:148px;top:264.4px">aktuelle Leistungsdetails</div>
<div class="lb" style="left:152px;top:282.6px">Konto</div>
<div class="in" style="left:239px;top:280px;width:156px;height:13px"><span style="top:1.6px;width:166.5px;overflow:hidden">6000 - Pensionstaxen</span><div class="dd"></div></div>
<div class="lb" style="left:152px;top:298.1px">Kostenstelle</div>
<div class="in" style="left:239px;top:296px;width:156px;height:13px"><span style="top:1.6px;width:166.5px;overflow:hidden">100 - Pension</span><div class="dd"></div></div>
<div class="lb" style="left:152px;top:314.1px">Kassenpflichtig</div>
<div class="in" style="left:239px;top:311.5px;width:138px;height:13.0px"><span style="top:1.6px;width:145.7px;overflow:hidden">Non soumis-caisse</span><div class="dd"></div></div>
<div class="wr" style="left:381px;top:311px"><svg style="position:absolute;left:1.5px;top:1.5px" width="10" height="10" viewBox="0 0 10 10"><path d="M3 3l5.2 5.2" stroke="#e5522b" stroke-width="2.6" stroke-linecap="round"/><circle cx="2.6" cy="2.6" r="2.1" fill="none" stroke="#6f6f6f" stroke-width="1.3"/></svg></div>
<div class="lb" style="left:152px;top:329.8px">Einheit</div>
<div class="in" style="left:239px;top:327px;width:138px;height:13px"><span style="top:1.6px;width:145.7px;overflow:hidden">Journée(s)</span><div class="dd"></div></div>
<div class="wr" style="left:381px;top:327px"><svg style="position:absolute;left:1.5px;top:1.5px" width="10" height="10" viewBox="0 0 10 10"><path d="M3 3l5.2 5.2" stroke="#e5522b" stroke-width="2.6" stroke-linecap="round"/><circle cx="2.6" cy="2.6" r="2.1" fill="none" stroke="#6f6f6f" stroke-width="1.3"/></svg></div>
<div class="lb" style="left:152px;top:345.8px">Leistungstyp</div>
<div class="in" style="left:239px;top:343px;width:138px;height:13px"><span style="top:1.6px;width:145.7px;overflow:hidden">Pension et soins</span><div class="dd"></div></div>
<div class="wr" style="left:381px;top:343px"><svg style="position:absolute;left:1.5px;top:1.5px" width="10" height="10" viewBox="0 0 10 10"><path d="M3 3l5.2 5.2" stroke="#e5522b" stroke-width="2.6" stroke-linecap="round"/><circle cx="2.6" cy="2.6" r="2.1" fill="none" stroke="#6f6f6f" stroke-width="1.3"/></svg></div>
<div class="lb" style="left:152px;top:363.1px">Steuercode</div>
<div class="in" style="left:239px;top:361px;width:156px;height:13px"><span style="top:1.6px;width:166.5px;overflow:hidden">-</span><div class="dd"></div></div>
<div class="lb" style="left:152px;top:380.1px">Rechnungstyp</div>
<div class="in" style="left:239px;top:377.5px;width:138px;height:13.0px"><div class="dd"></div></div>
<div class="wr" style="left:381px;top:377px"><svg style="position:absolute;left:1.5px;top:1.5px" width="10" height="10" viewBox="0 0 10 10"><path d="M3 3l5.2 5.2" stroke="#e5522b" stroke-width="2.6" stroke-linecap="round"/><circle cx="2.6" cy="2.6" r="2.1" fill="none" stroke="#6f6f6f" stroke-width="1.3"/></svg></div>
<div class="lb" style="left:152px;top:397.1px">Pflegestufe</div>
<div class="in" style="left:239px;top:395px;width:156px;height:13px;background:#fff"></div>
<div class="ib" style="left:381px;top:411px"></div>
<div class="gb" style="left:414px;top:268px;width:213px;height:77px"></div>
<div class="gt" style="left:419px;top:264.4px">aktuelle Ansätze</div>
<div class="lb" style="left:419px;top:283.1px">Ansatz</div>
<div class="in" style="left:466px;top:281px;width:65px;height:13px;background:#fff"><span style="left:auto;right:2px;top:1.6px;transform-origin:100% 0">110,00</span></div>
<div class="lb" style="left:419px;top:298.4px">Ansatz2</div>
<div class="in" style="left:466px;top:296px;width:65px;height:13px;background:#fff"><span style="left:auto;right:2px;top:1.6px;transform-origin:100% 0">0,00</span></div>
<div class="lb" style="left:419px;top:314.3px">Anzahl</div>
<div class="in" style="left:466px;top:312px;width:65px;height:13px;background:#fff"><span style="left:auto;right:2px;top:1.6px;transform-origin:100% 0">1,00</span></div>
<div class="lb" style="left:419px;top:330.3px">Rabatt in %</div>
<div class="in" style="left:466px;top:328px;width:65px;height:13px;background:#fff"></div>
<div class="ib" style="left:605px;top:328px"></div>
<div class="gb" style="left:414px;top:351px;width:213px;height:38px"></div>
<div class="gt" style="left:419px;top:347.4px">Mandantenverwendung</div>
<div class="lb" style="left:419px;top:368.6px">Mandant</div>
<div class="in" style="left:466px;top:367px;width:154px;height:13px"><span style="top:1.6px;width:164.2px;overflow:hidden">01</span><div class="dd"></div></div>
<div class="lb" style="left:419px;top:396.4px">Strichcode</div>
<div class="in" style="left:466px;top:394px;width:154px;height:13px;background:#fff"></div>

<!-- GRIDS -->
<div class="a" style="left:143px;top:438.5px;width:484px;height:40.5px;background:#fff;border:1px solid #a7aeb8"></div>
<div class="a gh2" style="left:144px;top:439.5px;width:11px;height:12.0px"></div>
<div class="a gh2" style="left:155px;top:439.5px;width:129px;height:12.0px;border-left:1px solid #f4f6f9"></div>
<div class="lb" style="left:158.5px;top:442.5px;font-size:7.6px">EAN-Code</div>
<div class="a gh2" style="left:284px;top:439.5px;width:130.5px;height:12.0px;border-left:1px solid #f4f6f9"></div>
<div class="lb" style="left:287.5px;top:442.5px;font-size:7.6px">Pharma-Code</div>
<div class="a gh2" style="left:414.5px;top:439.5px;width:65.0px;height:12.0px;border-left:1px solid #f4f6f9"></div>
<div class="lb" style="left:418.0px;top:442.5px;font-size:7.6px">Aktiv</div>
<div class="a" style="left:144px;top:451.5px;width:11px;height:11.0px;background:linear-gradient(90deg,#e9ecf1,#dde2e9);border-right:1px solid #b5bcc8;border-bottom:1px solid #b9c0ca"></div>
<div class="a" style="left:147px;top:453.5px;border-top:3px solid transparent;border-bottom:3px solid transparent;border-left:3.5px solid #8793a5"></div>
<div class="a" style="left:155px;top:451.5px;width:324.5px;height:11.0px;background:#7db8e9;border-bottom:1px dashed #d9ebf9"></div>
<div class="a" style="left:284px;top:451.5px;width:1px;height:11.0px;background:#bcdcf5"></div>
<div class="a" style="left:414.5px;top:451.5px;width:1px;height:11.0px;background:#bcdcf5"></div>
<div class="a" style="left:276px;top:443.5px;border-left:2.5px solid transparent;border-right:2.5px solid transparent;border-bottom:3px solid #333"></div>
<div class="a" style="left:444px;top:453.5px;width:7px;height:6px;border:1px solid #6b7380;background:linear-gradient(#d8dce2,#aab1bc)"></div>
<div class="a" style="left:143px;top:485.5px;width:484px;height:74.0px;background:#fff;border:1px solid #a7aeb8"></div>
<div class="a gh2" style="left:144px;top:486.5px;width:11px;height:12.0px"></div>
<div class="a gh2" style="left:155px;top:486.5px;width:97px;height:12.0px;border-left:1px solid #f4f6f9"></div>
<div class="lb" style="left:158.5px;top:489.5px;font-size:7.6px">MiGeL-Code</div>
<div class="a gh2" style="left:252px;top:486.5px;width:52px;height:12.0px;border-left:1px solid #f4f6f9"></div>
<div class="lb" style="left:255.5px;top:489.5px;font-size:7.6px">Gültig von</div>
<div class="a gh2" style="left:304px;top:486.5px;width:51.5px;height:12.0px;border-left:1px solid #f4f6f9"></div>
<div class="lb" style="left:307.5px;top:489.5px;font-size:7.6px">Gültig bis</div>
<div class="a gh2" style="left:355.5px;top:486.5px;width:72.0px;height:12.0px;border-left:1px solid #f4f6f9"></div>
<div class="lb" style="left:359.0px;top:489.5px;font-size:7.6px">Inkontinenzgrad</div>
<div class="a gh2" style="left:427.5px;top:486.5px;width:109.5px;height:12.0px;border-left:1px solid #f4f6f9"></div>
<div class="lb" style="left:431.0px;top:489.5px;font-size:7.6px">Leistungstyp</div>
<div class="a gh2" style="left:537px;top:486.5px;width:78px;height:12.0px;border-left:1px solid #f4f6f9"></div>
<div class="lb" style="left:540.5px;top:489.5px;font-size:7.6px">Kassenpflichtig</div>
<div class="a" style="left:144px;top:498.5px;width:11px;height:10.5px;background:linear-gradient(90deg,#e9ecf1,#dde2e9);border-right:1px solid #b5bcc8;border-bottom:1px solid #b9c0ca"></div>
<div class="a" style="left:147px;top:500.5px;border-top:3px solid transparent;border-bottom:3px solid transparent;border-left:3.5px solid #8793a5"></div>
<div class="a" style="left:155px;top:498.5px;width:460px;height:10.5px;background:#7db8e9;border-bottom:1px dashed #d9ebf9"></div>
<div class="a" style="left:252px;top:498.5px;width:1px;height:10.5px;background:#bcdcf5"></div>
<div class="a" style="left:304px;top:498.5px;width:1px;height:10.5px;background:#bcdcf5"></div>
<div class="a" style="left:355.5px;top:498.5px;width:1px;height:10.5px;background:#bcdcf5"></div>
<div class="a" style="left:427.5px;top:498.5px;width:1px;height:10.5px;background:#bcdcf5"></div>
<div class="a" style="left:537px;top:498.5px;width:1px;height:10.5px;background:#bcdcf5"></div>
<div class="a" style="left:244px;top:490.5px;border-left:2.5px solid transparent;border-right:2.5px solid transparent;border-bottom:3px solid #333"></div>

<!-- DROPDOWN -->
<div class="a" style="left:280px;top:67px;width:161px;height:58px;background:#fff;border:1px solid #b8bfc9;box-shadow:2px 2px 3px rgba(0,0,0,.22)"></div>
<div class="a" style="left:281px;top:68px;width:161px;height:14px;border:1.5px solid #c8282e;background:linear-gradient(#f8efc6,#fbe8a8 50%,#f4dd90);box-shadow:1px 1px 2px rgba(0,0,0,.2)"></div>
<svg class="a" style="left:283px;top:70px" width="12" height="10" viewBox="0 0 12 10"><path d="M0 3l3-2h9v2z" fill="#a86a34"/><path d="M2 3q2-3 5-2t4 2z" fill="#f2f2f2"/><rect x="0" y="3" width="12" height="7" fill="#cf8c50"/><rect x="0" y="3" width="12" height="1" fill="#e8b070"/></svg>
<div class="t" style="left:295.5px;top:71.5px;font-size:7.1px;color:#24304a">Gérer le catalogue des prestations</div>
<svg class="a" style="left:283px;top:84px" width="12" height="10" viewBox="0 0 12 10"><rect x=".5" y=".5" width="10" height="9" fill="#f4f8fd" stroke="#5c9ae0" stroke-width=".8"/><path d="M.5 3.5h10M.5 6.5h10M4 .5v9M7.5 .5v9" stroke="#5c9ae0" stroke-width=".7"/><path d="M4 5l4-3.5v2h4v3H8v2z" fill="#d81e1e"/></svg>
<div class="t" style="left:295.5px;top:85.8px;font-size:7.1px;color:#24304a">Importer catalogue des prestations</div>
<svg class="a" style="left:284px;top:97px" width="11" height="12" viewBox="0 0 11 12"><circle cx="4" cy="4" r="3.5" fill="#3a9a3a"/><rect x="1" y="7" width="5" height="5" fill="#e7b64a"/><path d="M5 6l5 5" stroke="#666" stroke-width="2"/></svg>
<div class="t" style="left:295.5px;top:100px;font-size:7.1px;color:#24304a">Droits sur catalogue des prestations</div>
<svg class="a" style="left:286px;top:112px" width="7" height="11" viewBox="0 0 7 11"><rect x=".5" y=".5" width="5" height="4" fill="#f4f6f4" stroke="#8a9a8a" stroke-width=".8"/><rect x=".5" y="6" width="5" height="4" fill="#f4f6f4" stroke="#8a9a8a" stroke-width=".8"/><path d="M1.5 8l1 1 2-2.5" stroke="#3a9a3a" fill="none" stroke-width=".9"/><path d="M1.5 2.5l1 1 2-2.5" stroke="#3a9a3a" fill="none" stroke-width=".9"/></svg>
<div class="t" style="left:295.5px;top:114.5px;font-size:7.1px;color:#24304a">Modification en bloc - catalogue prestations</div>
<!-- TOOLTIP -->
<div class="a" style="left:430px;top:84px;width:126px;height:16.5px;background:linear-gradient(#f7f8fa,#e6e8ec);border:1px solid #a2a6ad;border-radius:2px;box-shadow:1px 1px 2px rgba(0,0,0,.25)"></div>
<div class="t" style="left:434px;top:88.3px;font-size:7.6px;color:#4a4f58">Gérer le catalogue des prestations</div>

<!-- STATUS -->
<div class="a" style="left:0;top:571px;width:900px;height:14px;background:#f0eeed"></div>
<svg class="a" style="left:3px;top:573px" width="9" height="9" viewBox="0 0 9 9"><rect x="0" y="0" width="9" height="7" fill="#1b2a6e"/><rect x="1" y="1" width="7" height="5" fill="#3b7be0"/><rect x="2" y="7" width="5" height="2" fill="#333"/></svg>
<div class="st" style="left:14px">local / DomisAdmin</div>
<svg class="a" style="left:88px;top:573px" width="11" height="9" viewBox="0 0 11 9"><path d="M0 3q5-4 11 0v6q-5-3-11 0z" fill="#f1d9a8" stroke="#c79040" stroke-width=".8"/></svg>
<div class="st" style="left:100px">01 - Altersresidenz Meerblick</div>
<svg class="a" style="left:208px;top:573px" width="9" height="9" viewBox="0 0 9 9"><rect x=".5" y=".5" width="8" height="8" fill="#f3f3f3" stroke="#8a96a8"/><rect x="2" y="3" width="5" height="4" fill="#e0a040"/></svg>
<div class="st" style="left:219px">GJ: 2016 - Geschäftsjahr 2016 - O</div>
<svg class="a" style="left:335px;top:572px" width="10" height="10" viewBox="0 0 10 10"><circle cx="5" cy="4" r="3.5" fill="#e88a20"/><rect x="4" y="6" width="2" height="4" fill="#8a6a30"/></svg>
<div class="st" style="left:347px">2021.0.0.0</div>
<svg class="a" style="left:390px;top:572px" width="10" height="10" viewBox="0 0 10 10"><circle cx="3" cy="3" r="2" fill="#3a9a3a"/><circle cx="7" cy="3" r="2" fill="#2f7bd0"/><circle cx="5" cy="7" r="2.5" fill="#3a9a3a"/></svg>
<div class="st" style="left:401px">domis</div>
<svg class="a" style="left:430px;top:572px" width="9" height="10" viewBox="0 0 9 10"><circle cx="4.5" cy="3" r="2.5" fill="#e6a86c"/><path d="M0 10q0-5 4.5-5T9 10z" fill="#c88a3a"/></svg>
<div class="st" style="left:441px">Français (Suisse)</div>
<svg class="a" style="left:504px;top:572px" width="9" height="10" viewBox="0 0 9 10"><path d="M1 0h7v10H1z" fill="#2f7bd0"/><rect x="2" y="2" width="5" height="3" fill="#9fd0f5"/></svg>
<div class="st" style="left:515px">Heim.WinApp</div>
<svg class="a" style="left:570px;top:573px" width="10" height="9" viewBox="0 0 10 9"><rect x="0" y="0" width="10" height="6" fill="#3a6fb0"/><rect x="3" y="6" width="4" height="3" fill="#777"/></svg>
<div class="st" style="left:582px">1405x942</div>
<svg class="a" style="left:622px;top:575px" width="11" height="6" viewBox="0 0 11 6"><path d="M1 0h9l1 6H0z" fill="#9aa0a8"/><rect x="1" y="3" width="9" height="2" fill="#d0d4da"/></svg>
<div class="st" style="left:633px">176 267 720 bytes</div>

</body></html>
